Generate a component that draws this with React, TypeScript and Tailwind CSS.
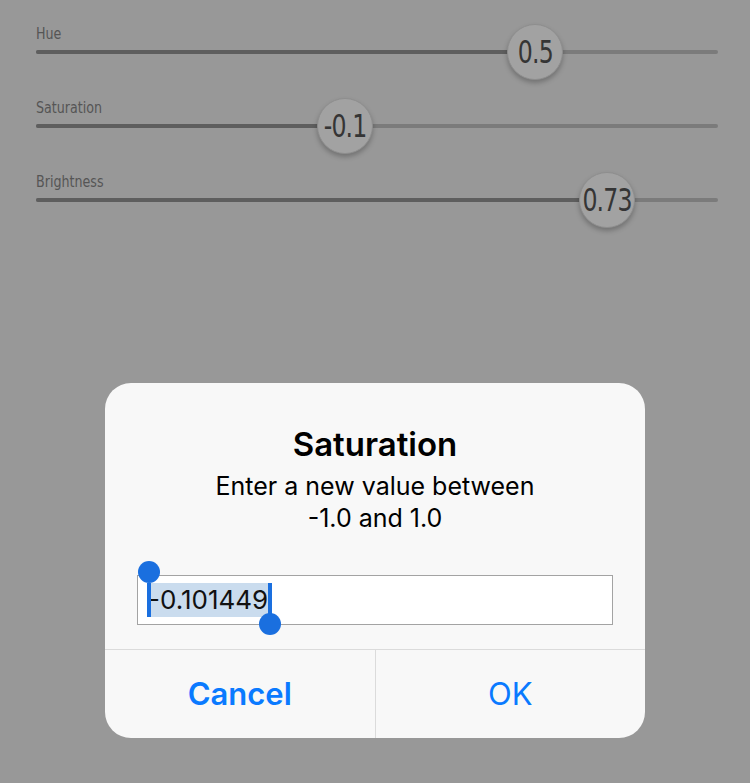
import React from 'react';

const sliders = [
    { label: 'Hue', value: '0.5', pos: 471 },
    { label: 'Saturation', value: '-0.1', pos: 281 },
    { label: 'Brightness', value: '0.73', pos: 543 },
];

function Slider({ label, value, pos }: { label: string; value: string; pos: number }) {
    return (
        <div className="flex flex-col">
            <div className="h-[20px] text-[16px] leading-[20px] text-[#555555] [font-stretch:condensed]">
                <span className="inline-block origin-left scale-x-[0.88]">{label}</span>
            </div>
            <div className="relative h-[36px]">
                <div className="absolute left-0 right-0 top-[6px] h-[4px] rounded-full bg-[#7b7b7b]" />
                <div
                    className="absolute left-0 top-[6px] h-[4px] rounded-full bg-[#5e5e5e]"
                    style={{ width: pos + 28 }}
                />
                <div
                    className="absolute top-[-20px] w-[56px] h-[56px] rounded-full bg-[#a2a2a2] border border-[#8e8e8e] shadow-[0_3px_5px_rgba(0,0,0,0.25)] flex items-center justify-center text-[32px] text-[#353535] [font-stretch:condensed]"
                    style={{ left: pos }}
                >
                    <span className="inline-block scale-x-[0.82] tracking-[-1px] whitespace-nowrap">{value}</span>
                </div>
            </div>
        </div>
    );
}

export default function App() {
    return (
        <div
            className="w-[750px] h-[783px] bg-[#989898] overflow-hidden flex flex-col"
            style={{ fontFamily: '"DejaVu Sans Condensed", "DejaVu Sans", sans-serif' }}
        >
            {/* Sliders */}
            <div className="flex flex-col gap-[18px] pl-[36px] pr-[32px] pt-[24px]">
                {sliders.map((s) => (
                    <Slider key={s.label} {...s} />
                ))}
            </div>

            {/* Alert */}
            <div className="flex-1 flex items-start justify-center pt-[155px]">
                <div className="w-[540px] rounded-[26px] bg-[#f8f8f8] flex flex-col font-['Inter',sans-serif]">
                    <div className="flex flex-col items-center pt-[41px]">
                        <div className="text-[33px] leading-[40px] font-semibold text-black">Saturation</div>
                        <div className="mt-[6px] text-[25px] leading-[32px] text-black text-center">
                            Enter a new value between
                            <br />
                            -1.0 and 1.0
                        </div>
                    </div>
                    <div className="px-[32px] pt-[41px] pb-[24px]">
                        <div className="relative h-[50px] bg-white border border-[#a3a3a3] flex items-center pl-[10px]">
                            <div className="relative flex items-center">
                                <span className="bg-[#cadcee] text-[26px] leading-[34px] text-[#111] pr-[1px]">
                                    -0.101449
                                </span>
                                <div className="absolute left-[-1px] top-0 w-[4px] h-[34px] bg-[#1a6fdf]" />
                                <div className="absolute left-[-10px] top-[-22px] w-[22px] h-[22px] rounded-full bg-[#1a6fdf]" />
                                <div className="absolute right-[-3px] top-0 w-[4px] h-[40px] bg-[#1a6fdf]" />
                                <div className="absolute right-[-12px] top-[30px] w-[22px] h-[22px] rounded-full bg-[#1a6fdf]" />
                            </div>
                        </div>
                    </div>
                    <div className="flex border-t border-[#dbdbdb] h-[89px]">
                        <div className="flex-1 flex items-center justify-center text-[31px] font-semibold text-[#0a7aff] border-r border-[#dbdbdb]">
                            Cancel
                        </div>
                        <div className="flex-1 flex items-center justify-center text-[31px] text-[#0a7aff]">
                            OK
                        </div>
                    </div>
                </div>
            </div>
        </div>
    );
}
